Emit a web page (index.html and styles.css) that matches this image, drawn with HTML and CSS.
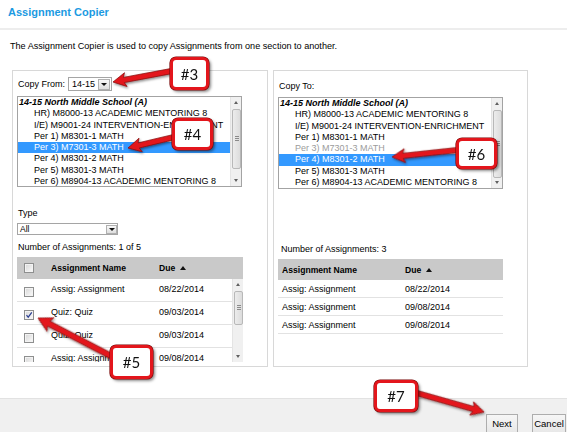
FILE: index.html
```html
<!DOCTYPE html>
<html lang="en">
<head>
<meta charset="utf-8">
<title>Assignment Copier</title>
<link rel="stylesheet" href="styles.css">
</head>
<body>
<div class="page">
  <header class="header"><h1 class="title">Assignment Copier</h1></header>
  <p class="intro">The Assignment Copier is used to copy Assignments from one section to another.</p>

  <div class="panels">
    <section class="panel panel-from">
      <div class="from-row">
        <span class="label from-label">Copy From:</span>
        <div class="select sel-year"><span class="sel-text">14-15</span><span class="sel-btn"></span></div>
      </div>
      <div class="listbox">
        <ul class="items">
          <li class="grp">14-15 North Middle School (A)</li>
          <li>HR) M8000-13 ACADEMIC MENTORING 8</li>
          <li>I/E) M9001-24 INTERVENTION-ENRICHMENT</li>
          <li>Per 1) M8301-1 MATH</li>
          <li class="sel">Per 3) M7301-3 MATH</li>
          <li>Per 4) M8301-2 MATH</li>
          <li>Per 5) M8301-3 MATH</li>
          <li>Per 6) M8904-13 ACADEMIC MENTORING 8</li>
          <li>Per 7) M7301-1 MATH</li>
        </ul>
        <div class="vscroll list-scroll"><span class="sb-up"></span><span class="sb-thumb"></span><span class="sb-down"></span></div>
      </div>

      <div class="label type-label">Type</div>
      <div class="select sel-type"><span class="sel-text">All</span><span class="sel-btn small"></span></div>
      <div class="label count">Number of Assignments: 1 of 5</div>

      <div class="grid grid-from">
        <div class="thead">
          <span class="c-chk"><i class="cb"></i></span>
          <span class="c-name">Assignment Name</span>
          <span class="c-due">Due <i class="sort"></i></span>
        </div>
        <div class="tbody">
          <div class="rows">
            <div class="row"><span class="c-chk"><i class="cb"></i></span><span class="c-name">Assig: Assignment</span><span class="c-due">08/22/2014</span></div>
            <div class="row"><span class="c-chk"><i class="cb on"><svg viewBox="0 0 8 8" width="8" height="8"><path d="M1.5 4.2 L3.2 6.2 L6.8 1.4" fill="none" stroke="#2b3f91" stroke-width="1.2"/></svg></i></span><span class="c-name">Quiz: Quiz</span><span class="c-due">09/03/2014</span></div>
            <div class="row"><span class="c-chk"><i class="cb"></i></span><span class="c-name">Quiz: Quiz</span><span class="c-due">09/03/2014</span></div>
            <div class="row"><span class="c-chk"><i class="cb"></i></span><span class="c-name">Assig: Assignment</span><span class="c-due">09/08/2014</span></div>
          </div>
          <div class="vscroll grid-scroll"><span class="sb-up"></span><span class="sb-thumb"></span><span class="sb-down"></span></div>
        </div>
      </div>
    </section>

    <section class="panel panel-to">
      <div class="label to-label">Copy To:</div>
      <div class="listbox list-to">
        <ul class="items">
          <li class="grp">14-15 North Middle School (A)</li>
          <li>HR) M8000-13 ACADEMIC MENTORING 8</li>
          <li>I/E) M9001-24 INTERVENTION-ENRICHMENT</li>
          <li>Per 1) M8301-1 MATH</li>
          <li class="dim">Per 3) M7301-3 MATH</li>
          <li class="sel">Per 4) M8301-2 MATH</li>
          <li>Per 5) M8301-3 MATH</li>
          <li>Per 6) M8904-13 ACADEMIC MENTORING 8</li>
          <li>Per 7) M7301-1 MATH</li>
        </ul>
        <div class="vscroll list-scroll long"><span class="sb-up"></span><span class="sb-thumb"></span><span class="sb-down"></span></div>
      </div>

      <div class="label count count-to">Number of Assignments: 3</div>

      <div class="grid grid-to">
        <div class="thead">
          <span class="c-name">Assignment Name</span>
          <span class="c-due">Due <i class="sort"></i></span>
        </div>
        <div class="row"><span class="c-name">Assig: Assignment</span><span class="c-due">08/22/2014</span></div>
        <div class="row"><span class="c-name">Assig: Assignment</span><span class="c-due">09/08/2014</span></div>
        <div class="row"><span class="c-name">Assig: Assignment</span><span class="c-due">09/08/2014</span></div>
      </div>
    </section>
  </div>

  <footer class="footer">
    <button class="btn btn-next" type="button">Next</button>
    <button class="btn btn-cancel" type="button">Cancel</button>
  </footer>

  <svg class="arrows" width="567" height="432" viewBox="0 0 567 432" aria-hidden="true">
    <defs>
      <filter id="sh" x="-20%" y="-20%" width="140%" height="140%">
        <feDropShadow dx="1" dy="1.5" stdDeviation="0.9" flood-color="#000" flood-opacity="0.45"/>
      </filter>
    </defs>
    <g filter="url(#sh)" fill="#e3161c" stroke="#8a0b0b" stroke-width="0.7" stroke-linejoin="round">
      <g transform="translate(113 82) rotate(169.4)"><polygon points="0,0 -13,-7 -11,-2.6 -62,-2.6 -62,2.6 -11,2.6 -13,7"/></g>
      <g transform="translate(128 148) rotate(166.6)"><polygon points="0,0 -13,-7 -11,-2.6 -50,-2.6 -50,2.6 -11,2.6 -13,7"/></g>
      <g transform="translate(38 318) rotate(-152.5)"><polygon points="0,0 -14,-7.5 -12,-2.8 -88,-2.8 -88,2.8 -12,2.8 -14,7.5"/></g>
      <g transform="translate(392 157) rotate(173.9)"><polygon points="0,0 -13,-7 -11,-2.6 -68,-2.6 -68,2.6 -11,2.6 -13,7"/></g>
      <g transform="translate(484 412) rotate(15.8)"><polygon points="0,0 -13,-7 -11,-2.6 -72,-2.6 -72,2.6 -11,2.6 -13,7"/></g>
    </g>
  </svg>

  <div class="callout c3">#3</div>
  <div class="callout c4">#4</div>
  <div class="callout c5">#5</div>
  <div class="callout c6">#6</div>
  <div class="callout c7">#7</div>
</div>
</body>
</html>
```

FILE: styles.css
```css
html, body {
  margin: 0;
  padding: 0;
  height: 100%;
  overflow: hidden;
  background: #fff;
}

body {
  font-family: "Liberation Sans", Arial, sans-serif;
  font-size: 9px;
  color: #000;
}

.page {
  position: relative;
  width: 567px;
  height: 432px;
  overflow: hidden;
}

/* header */
.header {
  box-sizing: border-box;
  height: 30px;
  padding: 6px 0 0 8px;
  border-bottom: 2px solid #ededed;
}

.title {
  margin: 0;
  font-size: 11px;
  line-height: 13px;
  font-weight: bold;
  color: #1b9ae2;
}

.intro {
  margin: 0;
  padding: 10px 0 0 10px;
  line-height: 12px;
  font-size: 9.1px;
}

/* panels */
.panels {
  display: flex;
  gap: 5px;
  margin-top: 18px;
  padding-left: 12px;
  align-items: flex-start;
}

.panel {
  box-sizing: border-box;
  height: 297px;
  border: 1px solid #d8d8d8;
  display: flex;
  flex-direction: column;
  align-items: flex-start;
}

.panel-from {
  width: 256px;
  padding: 6px 0 0 4px;
}

.panel-to {
  width: 255px;
  padding: 9px 0 0 4px;
}

.label {
  line-height: 12px;
  white-space: nowrap;
}

.from-row {
  display: flex;
  align-items: center;
  height: 14px;
}

.from-label {
  width: 50px;
  margin-left: 1px;
}

.to-label {
  margin-left: 1px;
}

/* selects */
.select {
  box-sizing: border-box;
  border: 1px solid #a5a5a5;
  background: #fff;
  display: flex;
  align-items: center;
  justify-content: space-between;
}

.sel-year {
  width: 44px;
  height: 14px;
  padding-left: 3px;
}

.sel-type {
  width: 101px;
  height: 12px;
  margin-top: 4px;
  padding-left: 2px;
  font-size: 8.5px;
}

.sel-btn {
  position: relative;
  box-sizing: border-box;
  width: 12px;
  height: 11px;
  margin-right: 1px;
  border: 1px solid #b0b0b0;
  background: linear-gradient(#f8f8f8, #dedede);
}

.sel-btn.small {
  width: 11px;
  height: 9px;
  margin-right: 0;
}

.sel-btn::after {
  content: "";
  position: absolute;
  left: 50%;
  top: 50%;
  margin: -1px 0 0 -3px;
  border-left: 3px solid transparent;
  border-right: 3px solid transparent;
  border-top: 3px solid #111;
}

/* list boxes */
.listbox {
  box-sizing: border-box;
  width: 225px;
  height: 91px;
  margin-top: 5px;
  border: 1px solid #a3a3a3;
  background: #fff;
  display: flex;
  overflow: hidden;
}

.list-to {
  height: 92px;
}

.items {
  list-style: none;
  margin: 0;
  padding: 0;
  flex: 1;
  min-width: 0;
  overflow: hidden;
}

.items li {
  line-height: 11.3px;
  padding-left: 16px;
  white-space: nowrap;
  overflow: hidden;
}

.items .grp {
  padding-left: 1px;
  font-weight: bold;
  font-style: italic;
}

.items .sel {
  background: #3399ff;
  color: #fff;
}

.items .dim {
  color: #9c9c9c;
}

/* scrollbars */
.vscroll {
  flex: none;
  box-sizing: border-box;
  width: 11px;
  background: #f0f0f0;
  border-left: 1px solid #e4e4e4;
  display: flex;
  flex-direction: column;
  align-items: center;
  padding: 4px 0;
}

.sb-up {
  width: 0;
  height: 0;
  border-left: 2.5px solid transparent;
  border-right: 2.5px solid transparent;
  border-bottom: 3px solid #606060;
}

.sb-down {
  width: 0;
  height: 0;
  margin-top: auto;
  border-left: 2.5px solid transparent;
  border-right: 2.5px solid transparent;
  border-top: 3px solid #606060;
}

.sb-thumb {
  position: relative;
  box-sizing: border-box;
  width: 9px;
  margin-top: 5px;
  border: 1px solid #b8b8b8;
  border-radius: 2px;
  background: linear-gradient(90deg, #ececec, #dcdcdc);
}

.sb-thumb::after {
  content: "";
  position: absolute;
  left: 2px;
  top: 50%;
  width: 4px;
  height: 1px;
  margin-top: -3px;
  background: #8a8a8a;
  box-shadow: 0 2px 0 #8a8a8a, 0 4px 0 #8a8a8a;
}

.list-scroll .sb-thumb {
  height: 60px;
}

.list-scroll.long .sb-thumb {
  height: 68px;
}

.grid-scroll .sb-thumb {
  height: 34px;
}

/* left lower part */
.type-label {
  margin-top: 20px;
  margin-left: 1px;
}

.count {
  margin-top: 6px;
  margin-left: 1px;
}

.count-to {
  margin-top: 54px;
  margin-left: 3px;
}

/* grids */
.grid {
  margin-top: 4px;
}

.grid-from {
  width: 226px;
}

.grid-to {
  width: 225px;
}

.thead {
  display: flex;
  align-items: center;
  height: 22px;
  background: #c9c9c9;
  font-weight: bold;
  font-size: 8.6px;
}

.grid-to .thead {
  height: 21px;
}

.tbody {
  display: flex;
  height: 83px;
}

.rows {
  flex: 1;
  min-width: 0;
  overflow: hidden;
}

.row {
  box-sizing: border-box;
  display: flex;
  align-items: flex-start;
  height: 23px;
  border-bottom: 1px solid #e2e2e2;
  line-height: 12px;
  padding-top: 4px;
}

.grid-to .row {
  height: 18px;
  padding-top: 3px;
}

.c-chk {
  flex: none;
  box-sizing: border-box;
  width: 34px;
  padding-left: 7px;
  display: flex;
}

.row .c-chk {
  margin-top: 4px;
}

.grid-from .c-name {
  flex: none;
  width: 108px;
}

.grid-to .c-name {
  flex: none;
  box-sizing: border-box;
  width: 127px;
  padding-left: 4px;
}

.c-due {
  flex: 1;
  white-space: nowrap;
}

.sort {
  display: inline-block;
  width: 0;
  height: 0;
  margin-left: 2px;
  vertical-align: 1px;
  border-left: 3.5px solid transparent;
  border-right: 3.5px solid transparent;
  border-bottom: 4px solid #111;
}

.cb {
  position: relative;
  display: inline-block;
  box-sizing: border-box;
  width: 10px;
  height: 10px;
  border: 1px solid #8e8f8f;
  background: linear-gradient(135deg, #d6d6d6, #fbfbfb);
  box-shadow: inset 0 0 0 1px #f3f3f3;
}

.cb svg {
  position: absolute;
  left: 0;
  top: 0;
}

/* footer */
.footer {
  box-sizing: border-box;
  margin-top: 31px;
  height: 40px;
  border-top: 1px solid #e2e2e2;
  background: #f0f0f0;
  display: flex;
  justify-content: flex-end;
  gap: 14px;
  padding: 15px 1px 0 0;
}

.btn {
  box-sizing: border-box;
  height: 19px;
  padding: 0;
  border: 1px solid #adadad;
  border-radius: 0;
  background: linear-gradient(#f6f6f6, #e8e8e8);
  font-family: "Liberation Sans", Arial, sans-serif;
  font-size: 9.5px;
  color: #000;
}

.btn-next {
  width: 32px;
}

.btn-cancel {
  width: 34px;
}

/* annotations */
.arrows {
  position: absolute;
  left: 0;
  top: 0;
  pointer-events: none;
}

.callout {
  position: absolute;
  box-sizing: border-box;
  border: 3px solid #e3161c;
  border-radius: 6px;
  background: #fff;
  box-shadow: 0 0 0 0.6px #7a0a0a, 2px 2px 3px rgba(0, 0, 0, 0.45);
  display: flex;
  align-items: center;
  justify-content: center;
  font-family: Lato, "Liberation Sans", sans-serif;
  font-size: 15px;
  color: #111;
}

.c3 { left: 170px; top: 57px; width: 39px; height: 33px; }
.c4 { left: 172px; top: 118px; width: 41px; height: 32px; }
.c5 { left: 110px; top: 345px; width: 43px; height: 34px; }
.c6 { left: 456px; top: 138px; width: 41px; height: 31px; }
.c7 { left: 374px; top: 380px; width: 44px; height: 32px; }
```
